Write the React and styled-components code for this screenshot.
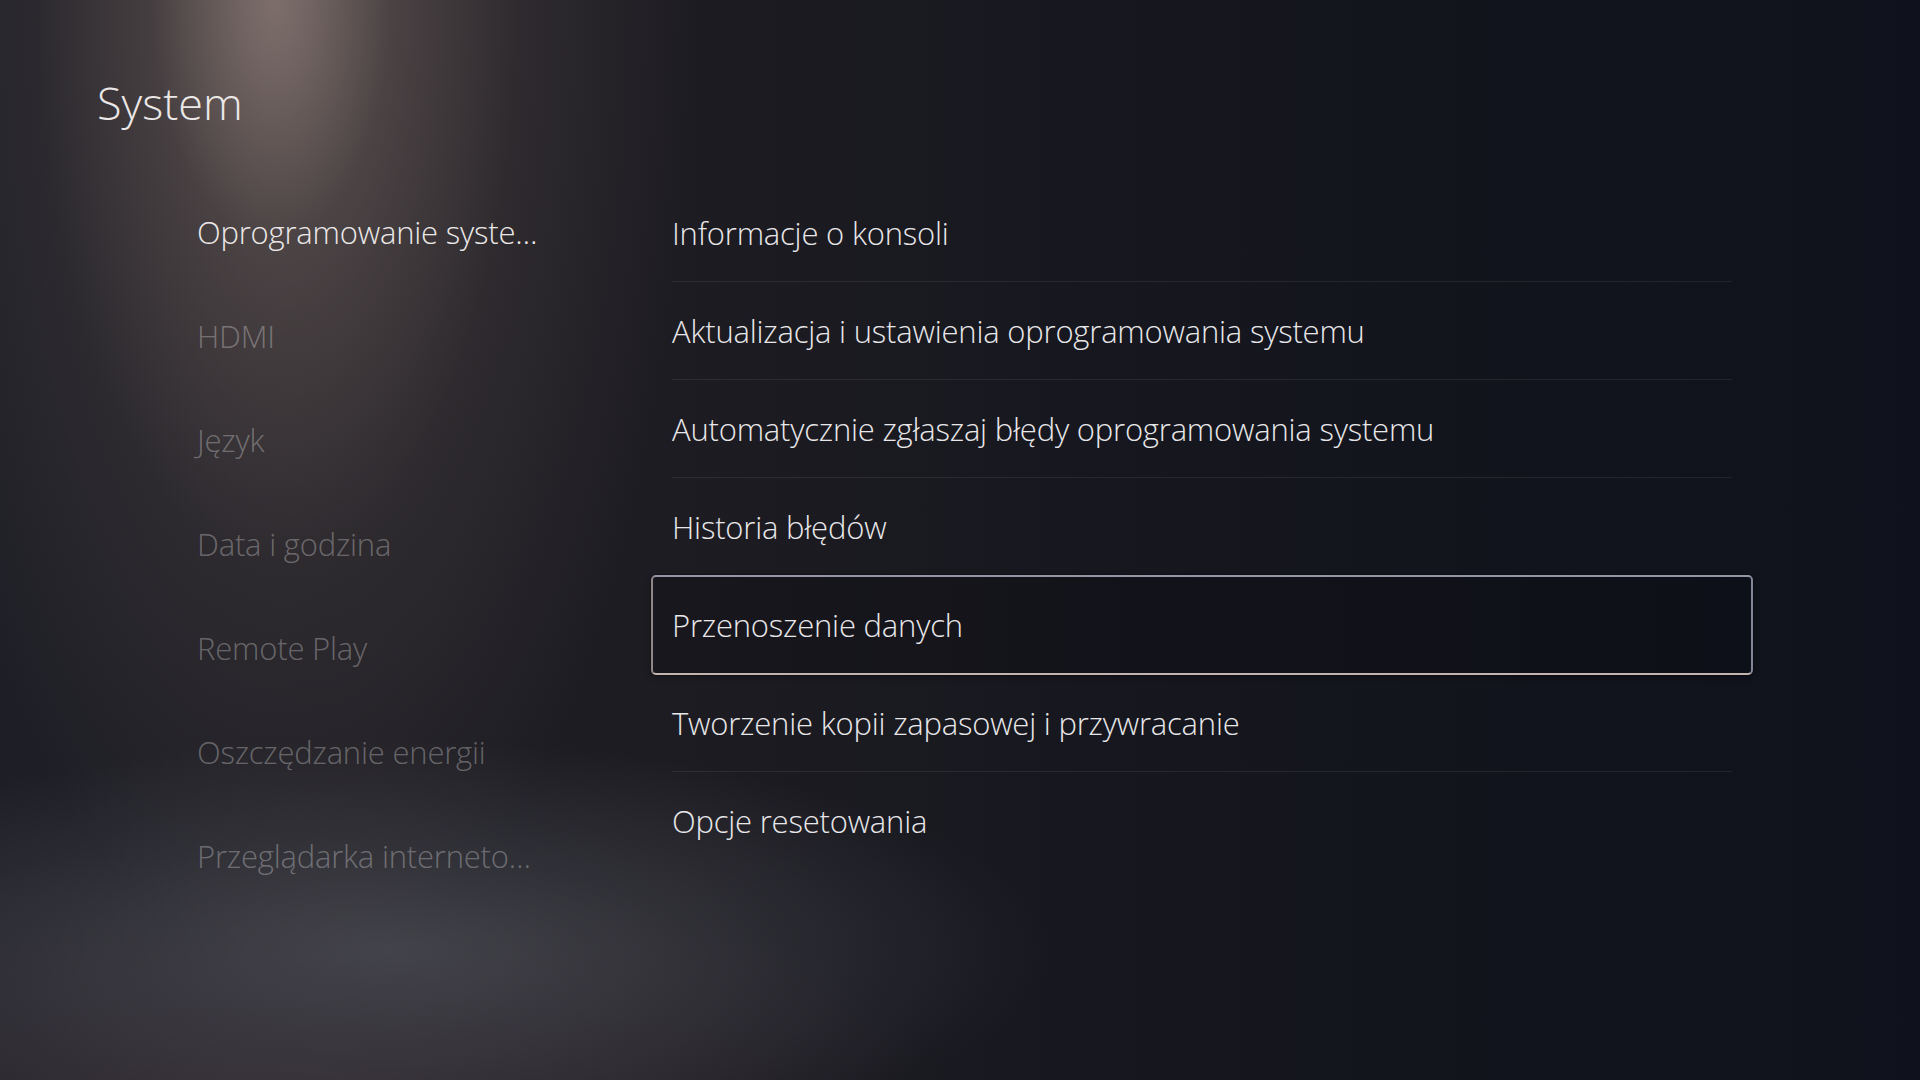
import React from "react";
import styled, { createGlobalStyle } from "styled-components";

const Global = createGlobalStyle`
  html, body { margin: 0; padding: 0; background: #15161d; }
  body { font-family: "Open Sans", "Noto Sans", sans-serif; -webkit-font-smoothing: antialiased; }
  * { box-sizing: border-box; }
`;

const Page = styled.div`
  min-height: 100vh;
  width: 100%;
  overflow: hidden;
  padding: 73px 0 0 97px;
  background:
    radial-gradient(ellipse 120px 240px at 272px 0px, rgba(170,150,142,0.42), rgba(170,150,142,0) 100%),
    radial-gradient(ellipse 240px 560px at 278px 0px, rgba(140,122,116,0.36), rgba(140,122,116,0) 100%),
    radial-gradient(ellipse 400px 980px at 295px 0px, rgba(100,86,84,0.55), rgba(100,86,84,0) 100%),
    radial-gradient(ellipse 660px 210px at 390px 950px, rgba(92,94,102,0.55), rgba(92,94,102,0) 100%),
    radial-gradient(ellipse 700px 260px at 250px 1110px, rgba(72,56,62,0.45), rgba(72,56,62,0) 100%),
    linear-gradient(90deg, #1e1f26 0%, #1d1c22 35%, #15161e 62%, #0f121c 100%);
`;

const Title = styled.h1`
  margin: 0;
  font-size: 45px;
  line-height: 60px;
  font-weight: 300;
  color: #ebe8e7;
`;

const Content = styled.div`
  display: flex;
  align-items: flex-start;
  margin-top: 47px;
  padding-left: 100px;
`;

const Nav = styled.nav`
  width: 454px;
  flex: none;
  display: flex;
  flex-direction: column;
`;

const NavItem = styled.div`
  height: 104px;
  display: flex;
  align-items: center;
  font-size: 31px;
  font-weight: 300;
  letter-spacing: -0.2px;
  white-space: nowrap;
  color: ${(p) => (p.$active ? "#ebe8e7" : "rgba(255,255,255,0.3)")};
`;

const List = styled.div`
  width: 1102px;
  flex: none;
  padding-top: 4px;
  display: flex;
  flex-direction: column;
`;

const Row = styled.div`
  position: relative;
  height: 98px;
  padding: 0 21px;
  &::before {
    content: "";
    display: ${(p) => (p.$focused ? "block" : "none")};
    position: absolute;
    top: -1px;
    bottom: -1px;
    left: 0;
    right: 0;
    border: 2px solid;
    border-color: #9496a6 #83879a #c4b4b0 #918689;
    border-radius: 5px;
    background: rgba(6, 6, 12, 0.2);
    box-shadow: 0 0 0 1px rgba(0, 0, 0, 0.25), 0 2px 6px rgba(0, 0, 0, 0.3);
  }
`;

const RowInner = styled.div`
  position: relative;
  height: 100%;
  display: flex;
  align-items: center;
  border-bottom: 1px solid ${(p) => (p.$line ? "rgba(255,255,255,0.075)" : "transparent")};
  font-size: 31px;
  font-weight: 300;
  letter-spacing: -0.2px;
  color: #e8e7e9;
  white-space: nowrap;
`;

const navItems = [
  "Oprogramowanie syste…",
  "HDMI",
  "Język",
  "Data i godzina",
  "Remote Play",
  "Oszczędzanie energii",
  "Przeglądarka interneto…",
];

const listItems = [
  "Informacje o konsoli",
  "Aktualizacja i ustawienia oprogramowania systemu",
  "Automatycznie zgłaszaj błędy oprogramowania systemu",
  "Historia błędów",
  "Przenoszenie danych",
  "Tworzenie kopii zapasowej i przywracanie",
  "Opcje resetowania",
];

const FOCUS = 4;

export default function App() {
  return (
    <>
      <Global />
      <Page>
        <Title>System</Title>
        <Content>
          <Nav>
            {navItems.map((t, i) => (
              <NavItem key={t} $active={i === 0}>
                {t}
              </NavItem>
            ))}
          </Nav>
          <List>
            {listItems.map((t, i) => {
              const line =
                i !== FOCUS && i !== FOCUS - 1 && i !== listItems.length - 1;
              return (
                <Row key={t} $focused={i === FOCUS}>
                  <RowInner $line={line}>{t}</RowInner>
                </Row>
              );
            })}
          </List>
        </Content>
      </Page>
    </>
  );
}
